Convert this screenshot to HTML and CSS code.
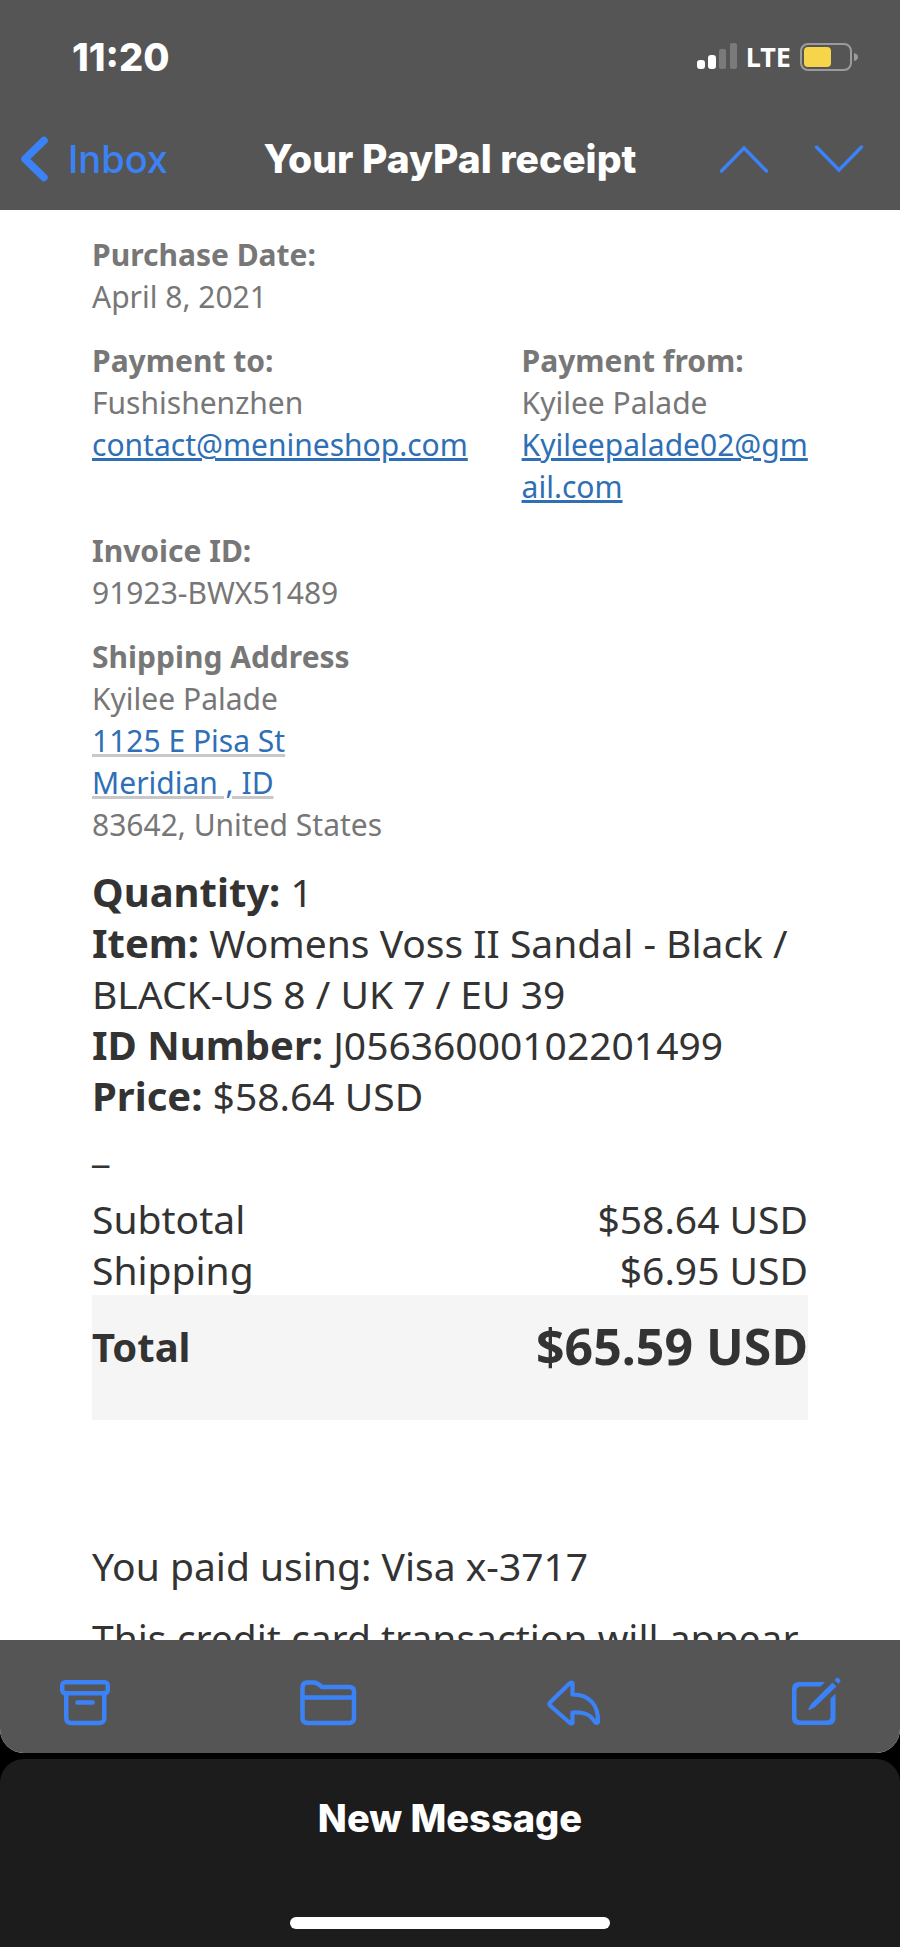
FILE: index.html
```html
<!DOCTYPE html>
<html lang="en">
<head>
<meta charset="utf-8">
<meta name="viewport" content="width=device-width, initial-scale=1">
<title>Your PayPal receipt</title>
<link rel="stylesheet" href="styles.css">
</head>
<body>
<div class="app">
  <section class="mail">
    <header class="top">
      <div class="status">
        <time class="clock">11:20</time>
        <div class="indicators">
          <svg class="signal" width="40" height="28" viewBox="0 0 40 28" aria-hidden="true">
            <rect x="0" y="17" width="8" height="9" rx="3" fill="#fff"/>
            <rect x="11" y="12" width="8" height="14" rx="3" fill="#fff"/>
            <rect x="22" y="6" width="7" height="20" rx="2" fill="#7a7a7a"/>
            <rect x="33" y="0" width="7" height="26" rx="2" fill="#7a7a7a"/>
          </svg>
          <span class="network">LTE</span>
          <svg class="battery" width="58" height="28" viewBox="0 0 58 28" aria-hidden="true">
            <rect x="1" y="1" width="50" height="26" rx="7" fill="none" stroke="#9b9b9b" stroke-width="2"/>
            <rect x="4" y="4" width="27" height="20" rx="4" fill="#f6d54a"/>
            <path d="M54 10q4 1 4 4t-4 4z" fill="#9b9b9b"/>
          </svg>
        </div>
      </div>
      <nav class="nav">
        <a class="back" href="#">
          <svg width="28" height="46" viewBox="0 0 28 46" aria-hidden="true"><path d="M24 4.500L5 23l19 18.500" fill="none" stroke="currentColor" stroke-width="7.500" stroke-linecap="round" stroke-linejoin="round"/></svg>
          Inbox
        </a>
        <h1 class="title">Your PayPal receipt</h1>
        <div class="steps">
          <button class="icon" type="button" aria-label="Previous message"><svg width="48" height="28" viewBox="0 0 48 28"><path d="M1.500 26L24 3l22.500 23" fill="none" stroke="currentColor" stroke-width="3.500" stroke-linecap="round"/></svg></button>
          <button class="icon" type="button" aria-label="Next message"><svg width="48" height="28" viewBox="0 0 48 28"><path d="M1.500 2L24 25 46.500 2" fill="none" stroke="currentColor" stroke-width="3.500" stroke-linecap="round"/></svg></button>
        </div>
      </nav>
    </header>

    <main class="message">
      <div class="details">
        <p><strong>Purchase Date:</strong><br>April 8, 2021</p>
        <div class="parties">
          <p><strong>Payment to:</strong><br>Fushishenzhen<br><a href="#">contact@menineshop.com</a></p>
          <p><strong>Payment from:</strong><br>Kyilee Palade<br><a class="wrap" href="#">Kyileepalade02@gmail.com</a></p>
        </div>
        <p><strong>Invoice ID:</strong><br>91923-BWX51489</p>
        <p><strong>Shipping Address</strong><br>Kyilee Palade<br><a class="place" href="#">1125 E Pisa St</a><br><a class="place" href="#">Meridian , ID</a><br>83642, United States</p>
      </div>
      <p class="item"><strong>Quantity:</strong> 1<br><strong>Item:</strong> Womens Voss II Sandal - Black / BLACK-US 8 / UK 7 / EU 39<br><strong>ID Number:</strong> J05636000102201499<br><strong>Price:</strong> $58.64 USD</p>
      <p class="dash">_</p>
      <table class="totals">
        <tbody>
          <tr><th scope="row">Subtotal</th><td>$58.64 USD</td></tr>
          <tr><th scope="row">Shipping</th><td>$6.95 USD</td></tr>
        </tbody>
        <tfoot>
          <tr><th scope="row">Total</th><td>$65.59 USD</td></tr>
        </tfoot>
      </table>
      <div class="payment">
        <p>You paid using: Visa x-3717</p>
        <p>This credit card transaction will appear</p>
      </div>
    </main>

    <footer class="toolbar">
      <button class="icon" type="button" aria-label="Archive"><svg width="50" height="50" viewBox="0 0 50 50"><g fill="none" stroke="currentColor" stroke-width="4.500" stroke-linecap="round"><rect x="2.250" y="4.250" width="45.500" height="11" rx="3"/><path d="M6.250 15v25q0 5 5 5h28q5 0 5-5V15"/><path d="M17.500 24.500h15"/></g></svg></button>
      <button class="icon" type="button" aria-label="Move to folder"><svg width="57" height="50" viewBox="0 0 57 50"><path d="M2.500 40V9.500q0-5 5-5h6q3 0 5.500 2l3 2.500h27q5 0 5 5v26q0 5-5 5h-41.500q-5 0-5-5zM2.500 19.500H54" fill="none" stroke="currentColor" stroke-width="4.500" stroke-linejoin="round"/></svg></button>
      <button class="icon" type="button" aria-label="Reply"><svg width="54" height="50" viewBox="0 0 54 50"><path d="M25.500 5q-1.500-1-3 .5L3.500 24q-2 2 0 4L22.500 44.500q1.500 1.500 3 .5V34.500c11-.5 17 1 22.500 9.500q2 2 3 0c.5-16-7.500-27.500-25.500-27.500z" fill="none" stroke="currentColor" stroke-width="4.200" stroke-linejoin="round"/></svg></button>
      <button class="icon" type="button" aria-label="Compose"><svg width="50" height="50" viewBox="0 0 50 50"><path d="M34 4L29.500 8.500H10q-4.500 0-4.500 4.500v25.500q0 4 4.500 4h25q4.500 0 4.500-4V20.500l5-5V40q0 7-7 7H8q-7 0-7-7V11q0-7 7-7z" fill="currentColor"/><path d="M41.500 4.500l4 4-21.500 20.500-5.500 3q-1.500 0-1-1.500l3-5zM43.500 2l2-2q1-.8 2 0l1.500 1.500q1 1 0 2l-1.500 2.500z" fill="currentColor"/></svg></button>
    </footer>
  </section>

  <section class="draft">
    <button class="draft-title" type="button">New Message</button>
    <div class="home"></div>
  </section>
</div>
</body>
</html>
```
FILE: styles.css
```css
* {
  box-sizing: border-box;
}

body {
  margin: 0;
  background: #000;
}

p,
h1 {
  margin: 0;
}

button {
  padding: 0;
  border: 0;
  background: none;
  font: inherit;
  color: inherit;
}

svg {
  display: block;
  overflow: visible;
}

.app {
  display: flex;
  flex-direction: column;
  gap: 6px;
  height: 100vh;
  font-family: Inter, "Liberation Sans", sans-serif;
}

.mail {
  flex: 1;
  min-height: 0;
  display: flex;
  flex-direction: column;
  overflow: hidden;
  border-radius: 0 0 24px 24px;
  background: #fff;
}

.top {
  background: #555;
  color: #fff;
  padding-bottom: 6px;
}

.status {
  display: flex;
  justify-content: space-between;
  align-items: center;
  height: 114px;
  padding: 0 42px 0 72px;
}

.clock {
  font-size: 38px;
  font-weight: 800;
}

.indicators {
  display: flex;
  align-items: center;
  gap: 9px;
}

.network {
  font: 700 27px/28px "Noto Sans", sans-serif;
}

.nav {
  display: grid;
  grid-template-columns: 1fr auto 1fr;
  align-items: center;
  height: 90px;
  padding: 0 20px;
  line-height: 46px;
}

.back {
  display: flex;
  align-items: center;
  gap: 20px;
  color: #3b82f6;
  font-size: 38px;
  font-weight: 500;
  text-decoration: none;
}

.title {
  font-size: 39px;
  font-weight: 800;
}

.steps {
  display: flex;
  justify-content: flex-end;
  gap: 47px;
  padding-right: 17px;
}

.icon {
  color: #3b82f6;
}

.message {
  flex: 1;
  min-height: 0;
  overflow-y: auto;
  scrollbar-width: none;
  padding: 24px 92px 0;
  font-family: "Noto Sans", sans-serif;
  font-size: 39px;
  line-height: 51px;
  color: #333;
}

.details {
  display: grid;
  gap: 22px;
  font-size: 30px;
  line-height: 42px;
  color: #777;
}

.details a {
  color: #2f6fb5;
}

.parties {
  display: grid;
  grid-template-columns: 3fr 2fr;
}

.wrap {
  word-break: break-all;
}

.details .place {
  text-decoration-color: #c8c8c8;
}

.item {
  margin-top: 20px;
}

.item strong {
  font-size: 40px;
}

.totals {
  width: 100%;
  margin-top: 21px;
  border-collapse: collapse;
}

.totals th {
  padding: 0;
  font-weight: 400;
  text-align: left;
}

.totals td {
  padding: 0;
  text-align: right;
}

.totals tfoot {
  background: #f5f5f5;
}

.totals tfoot th,
.totals tfoot td {
  height: 125px;
  padding-bottom: 22px;
  font-size: 40px;
  font-weight: 700;
}

.totals tfoot td {
  font-size: 50px;
}

.payment {
  display: grid;
  gap: 21px;
  margin-top: 120px;
}

.toolbar {
  display: flex;
  justify-content: space-between;
  align-items: center;
  height: 113px;
  padding: 12px 59px 0 60px;
  background: #555;
}

.draft {
  display: flex;
  flex-direction: column;
  align-items: center;
  justify-content: space-between;
  height: 188px;
  padding: 34px 0 18px;
  border-radius: 24px 24px 0 0;
  background: #1c1c1c;
  color: #fff;
}

.draft-title {
  font-size: 38px;
  font-weight: 800;
  line-height: 50px;
}

.home {
  width: 320px;
  height: 12px;
  border-radius: 6px;
  background: #fff;
}
```
